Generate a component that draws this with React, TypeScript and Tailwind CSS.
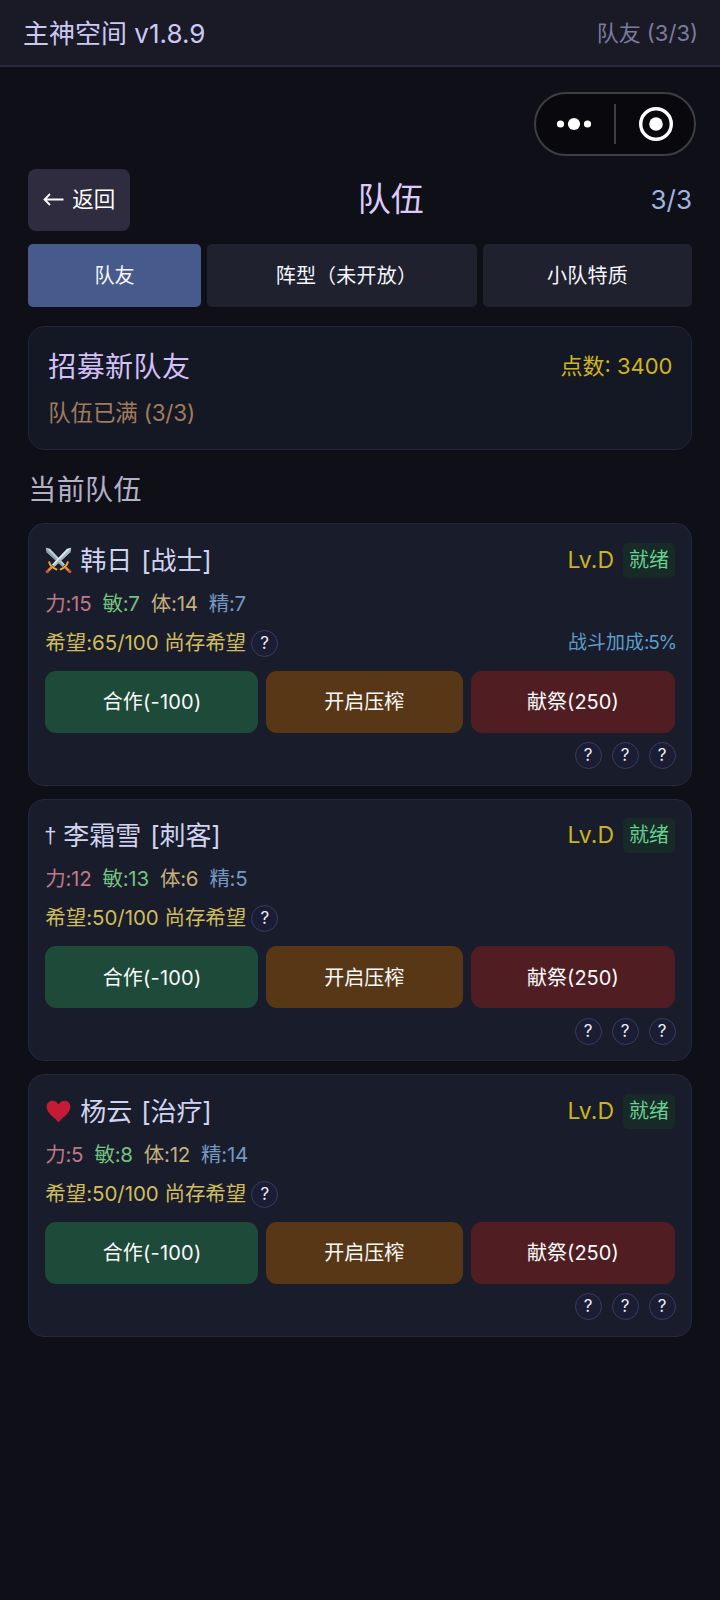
import React, { useState } from 'react';
import clsx from 'clsx';

type Teammate = {
  id: string;
  name: string;
  role: string;
  icon: 'sword' | 'dagger' | 'heart';
  stats: [number, number, number, number];
  hope: number;
  bonus?: number;
};

const TEAM: Teammate[] = [
  { id: 'han', name: '韩日', role: '战士', icon: 'sword', stats: [15, 7, 14, 7], hope: 65, bonus: 5 },
  { id: 'li', name: '李霜雪', role: '刺客', icon: 'dagger', stats: [12, 13, 6, 5], hope: 50 },
  { id: 'yang', name: '杨云', role: '治疗', icon: 'heart', stats: [5, 8, 12, 14], hope: 50 },
];

const STATS = [
  { label: '力', color: 'text-[#c0788a]' },
  { label: '敏', color: 'text-[#74c080]' },
  { label: '体', color: 'text-[#c4b07c]' },
  { label: '精', color: 'text-[#7498c4]' },
];

const TABS = [
  { label: '队友', width: 'w-[172.5px]' },
  { label: '阵型（未开放）', width: 'w-[270.5px] pl-[9px] tracking-[0.2px]' },
  { label: '小队特质', width: 'w-[209px] tracking-[0.2px]' },
];

function SwordsIcon() {
  return (
    <svg width="27" height="27" viewBox="0 0 27 27">
      <path d="M0.8 0.8 L5 1.8 L20 17.4 L17.6 19.8 L1.8 5.2 Z" fill="#c3d3d8" />
      <path d="M0.8 0.8 L18.8 18.6 L17.6 19.8 L1.8 5.2 Z" fill="#8ba3ac" />
      <path d="M26.2 0.8 L22 1.8 L7 17.4 L9.4 19.8 L25.2 5.2 Z" fill="#dde9ec" />
      <path d="M26.2 0.8 L8.2 18.6 L9.4 19.8 L25.2 5.2 Z" fill="#a3b9c1" />
      <path d="M4.2 15.2 Q5.4 19.6 11.4 22.4" fill="none" stroke="#eda83a" strokeWidth="2" strokeLinecap="round" />
      <path d="M22.8 15.2 Q21.6 19.6 15.6 22.4" fill="none" stroke="#eda83a" strokeWidth="2" strokeLinecap="round" />
      <path d="M7 19.8 L3 23.8" stroke="#e58a3a" strokeWidth="2.6" />
      <path d="M20 19.8 L24 23.8" stroke="#e58a3a" strokeWidth="2.6" />
      <circle cx="2.3" cy="24.6" r="1.7" fill="#c9553a" />
      <circle cx="24.7" cy="24.6" r="1.7" fill="#c9553a" />
    </svg>
  );
}

function HeartIcon() {
  return (
    <svg width="27" height="27" viewBox="0 0 27 27">
      <path
        d="M13.5 24.4 C11 20.5 1.6 15.5 1.6 9 C1.6 5.2 4.2 2.8 7.4 2.8 C10.2 2.8 12.4 4.4 13.5 6.6 C14.6 4.4 16.8 2.8 19.6 2.8 C22.8 2.8 25.4 5.2 25.4 9 C25.4 15.5 16 20.5 13.5 24.4 Z"
        fill="#c41c34"
      />
    </svg>
  );
}

function HelpDot() {
  return (
    <button className="w-[27px] h-[27px] shrink-0 rounded-full border-[1.5px] border-[#3a3c60] bg-[#1b1d35] flex items-center justify-center text-[17px] leading-none text-[#f0f0fa]">
      ?
    </button>
  );
}

function TeammateCard({ mate }: { mate: Teammate }) {
  return (
    <div className="h-[262.5px] rounded-[16px] border-[1.5px] border-[#25283a] bg-[#191c2a] px-4 pt-[18px]">
      <div className="h-[36px] flex items-center justify-between">
        <div className="flex items-center text-[26px] text-[#d0d4f0]">
          {mate.icon === 'sword' && <SwordsIcon />}
          {mate.icon === 'heart' && <HeartIcon />}
          {mate.icon === 'dagger' && (
            <span className="w-[11px] -ml-[1px] text-[22px] leading-none font-['Liberation_Sans',sans-serif]">†</span>
          )}
          <span className="ml-[8px]">{mate.name}</span>
          <span className="ml-[9px] tracking-[-0.2px]">[{mate.role}]</span>
        </div>
        <div className="flex items-center gap-[9px]">
          <span className="text-[23px] text-[#ccb41c]">Lv.D</span>
          <span className="h-[35px] px-[6px] rounded-[5px] bg-[#182a28] text-[20px] leading-[34px] text-[#66d090]">就绪</span>
        </div>
      </div>

      <div className="mt-[9px] h-[34px] flex items-center gap-[11.2px] text-[20.5px] tracking-[-0.3px]">
        {STATS.map((s, i) => (
          <span key={s.label} className={s.color}>
            {s.label}:{mate.stats[i]}
          </span>
        ))}
      </div>

      <div className="mt-[4px] h-[36px] flex items-center justify-between">
        <div className="flex items-center gap-[5px] text-[20.5px] tracking-[-0.05px] text-[#d0bc5c]">
          <span>希望:{mate.hope}/100 尚存希望</span>
          <HelpDot />
        </div>
        {mate.bonus && (
          <span className="pt-[1px] -mr-[1px] text-[19px] text-[#5c9cc8]">
            战斗加成<span className="tracking-[-1.2px]">:{mate.bonus}%</span>
          </span>
        )}
      </div>

      <div className="mt-[9.5px] h-[62px] flex gap-[8px] text-[20px] text-[#fafafa]">
        <button className="w-[212.5px] rounded-[11px] bg-[#1e4a3a] pt-[1px] pl-[1px] tracking-[0.2px]">合作(-100)</button>
        <button className="w-[197px] rounded-[11px] bg-[#583716] pt-[1px]">开启压榨</button>
        <button className="flex-1 rounded-[11px] bg-[#501e22] pt-[1px]">献祭(250)</button>
      </div>

      <div className="mt-[9.5px] -mr-[0.5px] flex justify-end gap-[10px]">
        <HelpDot />
        <HelpDot />
        <HelpDot />
      </div>
    </div>
  );
}

export default function App() {
  const [tab, setTab] = useState(0);

  return (
    <div className="w-[720px] h-[1600px] overflow-hidden bg-[#0f0f18] font-['Inter','Noto_Sans_CJK_SC',sans-serif]">
      {/* Header */}
      <header className="h-[67px] flex items-center justify-between pt-[2px] pl-[23px] pr-[22px] bg-[#1a1a27] border-b-2 border-[#2a2a3e]">
        <h1 className="text-[26px] text-[#ccc8f4]">主神空间 v1.8.9</h1>
        <span className="text-[22px] text-[#7c7a9e]">队友 (3/3)</span>
      </header>

      {/* Mini program capsule */}
      <div className="flex justify-end pt-[25px] pr-6">
        <div className="w-[162px] h-[64px] rounded-full border-2 border-[#3d3d42] bg-[#08080d] flex items-center">
          <svg width="158" height="60" viewBox="0 0 158 60">
            <circle cx="24.5" cy="30" r="3.6" fill="#fff" />
            <circle cx="38" cy="30" r="6.1" fill="#fff" />
            <circle cx="51.5" cy="30" r="3.6" fill="#fff" />
            <rect x="78" y="10" width="2" height="40" fill="#3d3d42" />
            <circle cx="120" cy="30" r="15.3" fill="none" stroke="#fff" strokeWidth="3.4" />
            <circle cx="120" cy="30" r="6.8" fill="#fff" />
          </svg>
        </div>
      </div>

      <main className="pl-[28.3px] pr-[28px]">
        <div className="mt-[12.5px] h-[62px] grid grid-cols-3 items-center">
          <button className="w-[102px] h-[62px] rounded-[8px] bg-[#2e2c3e] text-[21.5px] text-[#fafafa] flex items-center justify-center gap-[8px]">
            <svg width="21" height="13" viewBox="0 0 21 13" fill="none" stroke="currentColor" strokeWidth="1.8">
              <path d="M20.5 6.5 H1.5 M7 1 L1.5 6.5 L7 12" />
            </svg>
            返回
          </button>
          <h2 className="pl-[61px] text-center text-[33px] text-[#dccaf8]">队伍</h2>
          <span className="text-right text-[26px] text-[#a0b4e0]">3/3</span>
        </div>

        {/* Tabs */}
        <div className="mt-[13.5px] h-[63px] flex justify-between">
          {TABS.map((t, i) => (
            <button
              key={t.label}
              onClick={() => setTab(i)}
              className={clsx('rounded-[5px] text-[20px] text-[#f6f6fc]', t.width, tab === i ? 'bg-[#475a8c]' : 'bg-[#1f212f]')}
            >
              {t.label}
            </button>
          ))}
        </div>

        {/* Recruit */}
        <div className="mt-[19px] h-[124px] rounded-[17px] border-[1.5px] border-[#222539] bg-[#141824] pl-[19px] pr-[18.5px] pt-[19px]">
          <div className="h-[42px] flex items-center justify-between">
            <h3 className="text-[28px] tracking-[0.4px] text-[#d4c0f8]">招募新队友</h3>
            <span className="pb-[1px] text-[22px] text-[#d0b41c]">点数: 3400</span>
          </div>
          <p className="mt-[9px] text-[22.5px] leading-[32px] tracking-[-0.2px] text-[#a07c5c]">队伍已满 (3/3)</p>
        </div>

        <h3 className="mt-[19px] h-[42px] text-[28px] leading-[42px] tracking-[0.4px] text-[#b4b0c8]">当前队伍</h3>

        <div className="mt-[12px] flex flex-col gap-[13px]">
          {TEAM.map((m) => (
            <TeammateCard key={m.id} mate={m} />
          ))}
        </div>
      </main>
    </div>
  );
}
